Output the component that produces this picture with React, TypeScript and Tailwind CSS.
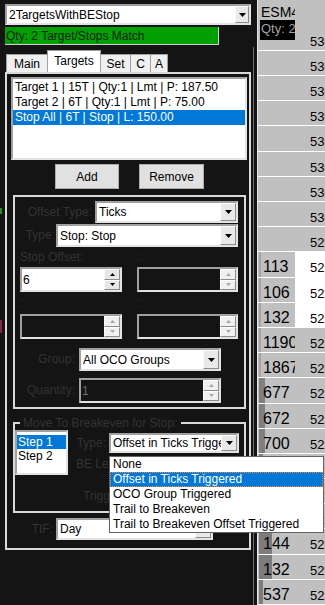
import React from "react";

type Row = {
  price: string;
  size?: string;
  white?: boolean;
  bar?: number;
  barLeft?: number;
  barColor?: string;
};

const ROWS: Row[] = [
  { price: "5301.50" },
  { price: "5301.25" },
  { price: "5301.00" },
  { price: "5300.75" },
  { price: "5300.50" },
  { price: "5300.25" },
  { price: "5300.00" },
  { price: "5299.75" },
  { price: "5299.50", size: "113", white: true, bar: 2, barLeft: 1, barColor: "#a4a4a4" },
  { price: "5299.25", size: "106", white: true, bar: 2, barLeft: 1, barColor: "#a4a4a4" },
  { price: "5299.00", size: "132", white: true, bar: 2, barLeft: 1, barColor: "#a4a4a4" },
  { price: "5298.75", size: "1190", bar: 2, barLeft: 1, barColor: "#a4a4a4" },
  { price: "5298.50", size: "1867", bar: 2, barLeft: 1, barColor: "#a4a4a4" },
  { price: "5298.25", size: "677", bar: 6, barLeft: 1, barColor: "#808080" },
  { price: "5298.00", size: "672", bar: 6, barLeft: 1, barColor: "#808080" },
  { price: "5297.75", size: "700", bar: 6, barLeft: 1, barColor: "#808080" },
  { price: "5297.50", size: "412", bar: 4, barLeft: 1, barColor: "#808080" },
  { price: "5297.25", size: "389", bar: 4, barLeft: 1, barColor: "#808080" },
  { price: "5297.00", size: "256", bar: 3, barLeft: 1, barColor: "#808080" },
  { price: "5296.75", size: "144", bar: 13, barLeft: 1, barColor: "#7c7c7c" },
  { price: "5296.50", size: "132", bar: 13, barLeft: 1, barColor: "#7c7c7c" },
  { price: "5296.25", size: "537", bar: 4, barLeft: 1, barColor: "#7c7c7c" },
];

const sunken =
  "border-2 border-t-[#a0a0a0] border-l-[#a0a0a0] border-r-[#e3e3e3] border-b-[#e3e3e3]";
const raised =
  "border border-t-[#fcfcfc] border-l-[#fcfcfc] border-r-[#8c8c8c] border-b-[#8c8c8c]";
const label = "text-[12px] leading-[15px] text-[#333333] whitespace-nowrap";

function DropButton({ className = "w-[16px]" }: { className?: string }) {
  return (
    <div className={`flex shrink-0 items-center justify-center bg-[#e9e9e9] ${raised} ${className}`}>
      <svg width="7" height="4" viewBox="0 0 7 4">
        <path d="M0 0h7L3.5 4z" fill="#000" />
      </svg>
    </div>
  );
}

function Combo({ text, className, btn }: { text: string; className: string; btn?: string }) {
  return (
    <div className={`flex shrink-0 bg-white ${sunken} ${className}`}>
      <div className="flex min-w-0 flex-1 items-center overflow-hidden whitespace-nowrap pl-[2px] text-[12px] leading-none text-black">
        {text}
      </div>
      <DropButton className={btn} />
    </div>
  );
}

function SpinBtn({ up, off }: { up?: boolean; off?: boolean }) {
  return (
    <div className={`flex flex-1 items-center justify-center ${raised} ${off ? "bg-[#f0f0f0]" : "bg-[#e6e6e6]"}`}>
      <svg width="5" height="3" viewBox="0 0 5 3">
        <path d={up ? "M0 3h5L2.5 0z" : "M0 0h5L2.5 3z"} fill={off ? "#a8a8a8" : "#000"} />
      </svg>
    </div>
  );
}

function Spin({ value, off, className }: { value?: string; off?: boolean; className: string }) {
  return (
    <div className={`flex shrink-0 ${sunken} ${off ? "bg-[#141414]" : "bg-white"} ${className}`}>
      <div className={`flex flex-1 items-center pl-[1px] text-[12px] leading-none ${off ? "text-[#6d6d6d]" : "text-black"}`}>
        {value}
      </div>
      <div className="flex w-[16px] flex-col">
        <SpinBtn up off={off} />
        <SpinBtn off={off} />
      </div>
    </div>
  );
}

function Tabs() {
  const tab = "flex items-center justify-center border-[#a0a0a0] text-[12px] leading-none text-black";
  return (
    <div className="mt-[5px] flex h-[22px] items-end pl-[1px]">
      <div className={`${tab} h-[18px] w-[41px] border-l border-t bg-[#f0f0f0]`}>Main</div>
      <div className={`${tab} h-[22px] w-[54px] border-l border-r border-t bg-white pb-[1px]`}>Targets</div>
      <div className={`${tab} h-[18px] w-[29px] border-t bg-[#f0f0f0]`}>Set</div>
      <div className={`${tab} h-[18px] w-[20px] border-l border-t bg-[#f0f0f0]`}>C</div>
      <div className={`${tab} h-[18px] w-[18px] border-l border-r border-t bg-[#f0f0f0]`}>A</div>
    </div>
  );
}

function OffsetGroup() {
  return (
    <div className="ml-[6px] mt-[6px] flex h-[214px] w-[233px] flex-col border-2 border-[#d9d9d9]">
      <div className="mt-[4px] flex h-[22px] items-center justify-end pr-[6px]">
        <span className={label}>Offset Type:</span>
        <Combo text="Ticks" className="ml-[3px] h-[22px] w-[143px]" />
      </div>
      <div className="mt-[1px] flex h-[23px] items-center justify-end pr-[6px]">
        <span className={label}>Type:</span>
        <Combo text="Stop: Stop" className="ml-[1px] h-[23px] w-[182px]" />
      </div>
      <div className="mt-[3px] grid grid-cols-[102px_101px] gap-x-[15px] pl-[5px]">
        <span className={label}>Stop Offset:</span>
        <span className={label}>:</span>
        <Spin value="6" className="mt-[2px] h-[25px] w-[102px]" />
        <Spin off className="mt-[2px] h-[25px] w-[101px]" />
        <span className={`${label} mt-[4px]`}>:</span>
        <span className={`${label} mt-[4px]`}>:</span>
        <Spin off className="mt-[3px] h-[25px] w-[102px]" />
        <Spin off className="mt-[3px] h-[25px] w-[101px]" />
      </div>
      <div className="mt-[9px] flex h-[23px] items-center">
        <span className={`${label} w-[60px] text-right`}>Group:</span>
        <Combo text="All OCO Groups" className="ml-[4px] h-[23px] w-[142px]" />
      </div>
      <div className="mt-[7px] flex h-[25px] items-center">
        <span className={`${label} w-[60px] text-right`}>Quantity:</span>
        <Spin value="1" off className="ml-[4px] h-[25px] w-[142px]" />
      </div>
    </div>
  );
}

function BreakevenGroup() {
  return (
    <fieldset className="ml-[6px] mt-[7px] h-[97px] w-[233px] border-2 border-[#d9d9d9]">
      <legend className="ml-[5px] px-[3px] text-[12px] leading-[14px] text-[#333333]">Move To Breakeven for Stop:</legend>
      <div className="flex">
        <div className={`flex h-[45px] w-[53px] shrink-0 flex-col bg-white pt-[3px] ${sunken}`}>
          <div className="h-[14px] bg-[#0078d7] pl-[1px] text-[12px] leading-[14px] text-white">Step 1</div>
          <div className="h-[14px] pl-[1px] text-[12px] leading-[14px] text-black">Step 2</div>
        </div>
        <div className="flex flex-col">
          <div className="mt-[3px] flex h-[20px] items-center">
            <span className={`${label} w-[38px] text-right`}>Type:</span>
            <Combo text="Offset in Ticks Triggered" className="ml-[3px] h-[20px] w-[130px]" />
          </div>
          <span className={`${label} ml-[8px] mt-[4px]`}>BE Level:</span>
          <span className={`${label} ml-[15px] mt-[17px]`}>Trigger:</span>
        </div>
      </div>
    </fieldset>
  );
}

function TabPage() {
  return (
    <div className="flex h-[478px] w-[246px] flex-col border-2 border-[#d9d9d9]">
      <div className={`ml-[4px] mt-[3px] h-[83px] w-[236px] bg-white pt-[1px] ${sunken}`}>
        <div className="h-[15px] pl-[2px] text-[12px] leading-[15px] text-black">Target 1 | 15T | Qty:1 | Lmt | P: 187.50</div>
        <div className="h-[15px] pl-[2px] text-[12px] leading-[15px] text-black">Target 2 | 6T | Qty:1 | Lmt | P: 75.00</div>
        <div className="h-[15px] bg-[#0078d7] pl-[2px] text-[12px] leading-[15px] text-white">Stop All | 6T | Stop | L: 150.00</div>
      </div>
      <div className="mt-[4px] flex h-[25px]">
        <button className="ml-[48px] h-[25px] w-[64px] border border-[#adadad] bg-[#e1e1e1] text-[12px] text-black">Add</button>
        <button className="ml-[20px] h-[25px] w-[65px] border border-[#adadad] bg-[#e1e1e1] text-[12px] text-black">Remove</button>
      </div>
      <OffsetGroup />
      <BreakevenGroup />
      <div className="mt-[5px] flex h-[22px] items-center">
        <span className={`${label} w-[46px] text-right`}>TIF:</span>
        <Combo text="Day" className="ml-[3px] h-[22px] w-[157px]" />
      </div>
    </div>
  );
}

function Ladder() {
  return (
    <div className="flex w-[68px] flex-col overflow-hidden border-l border-[#e6e6e6] bg-[#c0c0c0]">
      <div className="h-[26px] w-[37px] overflow-hidden whitespace-nowrap pl-[3px] pt-[4px] text-[14px] leading-[16px] text-black">
        ESM4
      </div>
      <div className="flex h-[31.3px] shrink-0 border-b border-white">
        <div className="w-[37px] shrink-0 pl-[2px]">
          <div className="h-[20px] w-[35px] overflow-hidden whitespace-nowrap bg-black pl-[1px] pt-[2px] text-[13px] leading-[13px] text-[#a0a0a0]">
            Qty: 2
          </div>
        </div>
        <div className="whitespace-nowrap pl-[15px] pt-[15px] text-[13px] leading-[13px] text-black">5301.75</div>
      </div>
      {ROWS.map((r) => (
        <div key={r.price} className="flex h-[25.2px] shrink-0 border-b border-white">
          <div className="relative w-[37px] shrink-0 overflow-hidden">
            {r.bar ? (
              <div
                className="absolute top-0 bottom-0"
                style={{ left: r.barLeft, width: r.bar, background: r.barColor }}
              />
            ) : null}
            <div className="relative whitespace-nowrap pl-[5px] pt-[7px] text-[16px] leading-[16px] text-black">{r.size}</div>
          </div>
          <div className={`flex-1 whitespace-nowrap pl-[15px] pt-[9px] text-[13px] leading-[13px] text-black ${r.white ? "bg-white" : ""}`}>
            {r.price}
          </div>
        </div>
      ))}
    </div>
  );
}

function DropList() {
  const item = "h-[15px] pl-[2px] text-[12px] leading-[13px] whitespace-nowrap";
  return (
    <div className="absolute left-[109px] top-[456px] w-[215px] border border-[#646464] bg-white text-black">
      <div className={`${item} border border-transparent`}>None</div>
      <div className={`${item} border border-dotted border-[#ff8728] bg-[#0078d7] text-white`}>Offset in Ticks Triggered</div>
      <div className={`${item} border border-transparent`}>OCO Group Triggered</div>
      <div className={`${item} border border-transparent`}>Trail to Breakeven</div>
      <div className={`${item} border border-transparent`}>Trail to Breakeven Offset Triggered</div>
    </div>
  );
}

export default function App() {
  return (
    <div className="relative flex h-[605px] w-[325px] overflow-hidden bg-[#141414] font-['Liberation_Sans',Arial,sans-serif]">
      <div className="flex w-[5px] shrink-0 flex-col">
        <div className="h-[208px]" />
        <div className="h-[6px] w-[2px] bg-[#2f8a2f]" />
        <div className="h-[106px]" />
        <div className="h-[13px] w-[2px] bg-[#8a2446]" />
      </div>
      <div className="flex w-[247px] shrink-0 flex-col pt-[4px]">
        <Combo text="2TargetsWithBEStop" className="h-[21px] w-[246px]" btn="w-[14px]" />
        <div className="mt-[2px] flex h-[18px] w-[214px] items-center border-b border-r border-[#cfcfcf] bg-[#00a000] pl-[1px] text-[12px] leading-none text-[#102010]">
          Qty: 2 Target/Stops Match
        </div>
        <Tabs />
        <TabPage />
      </div>
      <div className="w-[5px] shrink-0 pt-[47px]">
        <div className="ml-[1px] h-full w-[1px] bg-[#6e6e6e]" />
      </div>
      <Ladder />
      <DropList />
    </div>
  );
}
